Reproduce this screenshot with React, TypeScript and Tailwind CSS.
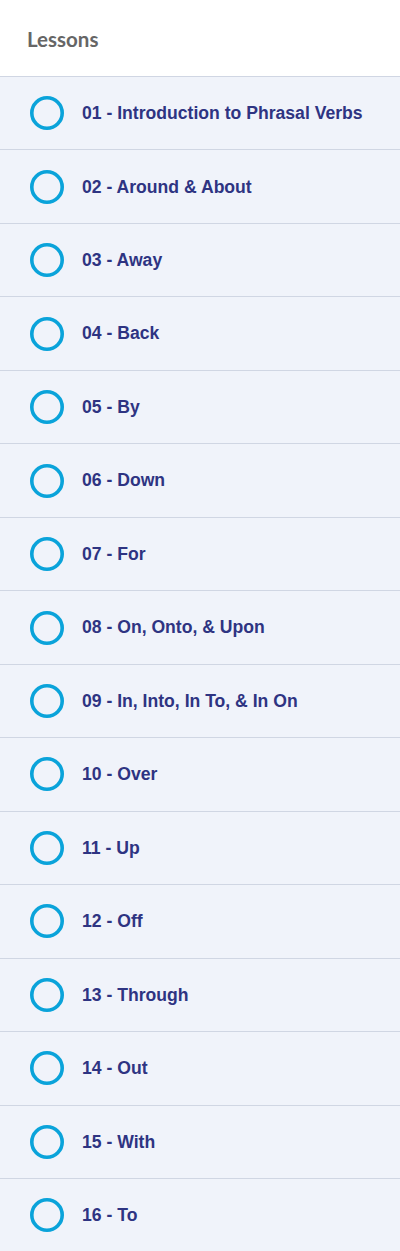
const lessons = [
  "01 - Introduction to Phrasal Verbs",
  "02 - Around & About",
  "03 - Away",
  "04 - Back",
  "05 - By",
  "06 - Down",
  "07 - For",
  "08 - On, Onto, & Upon",
  "09 - In, Into, In To, & In On",
  "10 - Over",
  "11 - Up",
  "12 - Off",
  "13 - Through",
  "14 - Out",
  "15 - With",
  "16 - To",
];

function Ring() {
  return (
    <svg width="34" height="34" viewBox="0 0 34 34" className="shrink-0">
      <circle cx="17" cy="17" r="15.2" fill="none" stroke="#0aa3da" strokeWidth="3.6" />
    </svg>
  );
}

export default function App() {
  return (
    <div className="w-[400px] h-[1251px] overflow-hidden bg-white">
      <div className="h-[76px] flex items-center px-[27px] pt-[2px]">
        <h2 className="font-['Lato',sans-serif] font-bold text-[20.5px] text-[#666666]">Lessons</h2>
      </div>
      {lessons.map((l) => (
        <div
          key={l}
          className="h-[73.47px] border-t border-[#d0d6e3] bg-[#f0f3fa] flex items-center pl-[29.5px] gap-[18.5px]"
        >
          <Ring />
          <span className="font-['Liberation_Sans',Arial,sans-serif] font-bold text-[17.6px] text-[#2e3482]">
            {l}
          </span>
        </div>
      ))}
    </div>
  );
}
